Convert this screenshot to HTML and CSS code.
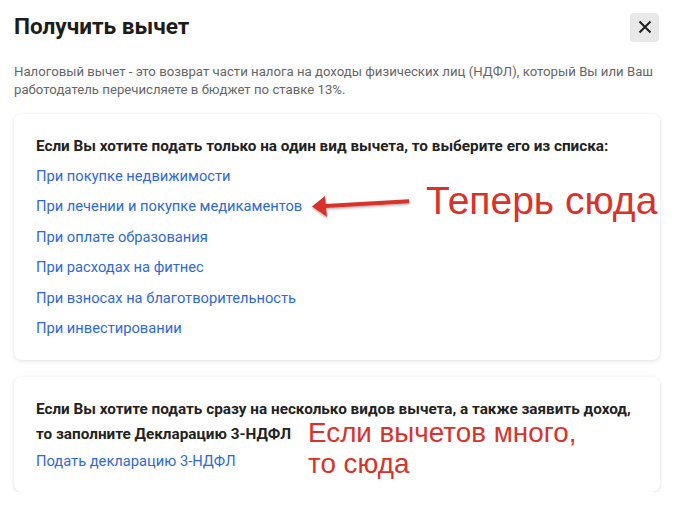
FILE: index.html
```html
<!DOCTYPE html>
<html lang="ru">
<head>
<meta charset="utf-8">
<link rel="stylesheet" href="styles.css">
</head>
<body>
<div class="dialog">
  <div class="header">
    <h1 class="title">Получить вычет</h1>
    <button class="close" aria-label="Закрыть">
      <svg width="14" height="14" viewBox="0 0 14 14"><path d="M1.5 1.5 L12.5 12.5 M12.5 1.5 L1.5 12.5" stroke="#1f1f1f" stroke-width="2" fill="none"/></svg>
    </button>
  </div>
  <p class="desc">Налоговый вычет - это возврат части налога на доходы физических лиц (НДФЛ), который Вы или Ваш работодатель перечисляете в бюджет по ставке 13%.</p>
  <div class="card card-one">
    <div class="card-title">Если Вы хотите подать только на один вид вычета, то выберите его из списка:</div>
    <div class="links">
      <a class="link" href="#">При покупке недвижимости</a>
      <a class="link" href="#">При лечении и покупке медикаментов</a>
      <a class="link" href="#">При оплате образования</a>
      <a class="link" href="#">При расходах на фитнес</a>
      <a class="link" href="#">При взносах на благотворительность</a>
      <a class="link" href="#">При инвестировании</a>
    </div>
  </div>
  <div class="card card-two">
    <div class="card-title multi">Если Вы хотите подать сразу на несколько видов вычета, а также заявить доход, <span class="nowrap">то заполните</span> Декларацию 3-НДФЛ</div>
    <a class="link decl" href="#">Подать декларацию 3-НДФЛ</a>
  </div>

  <svg class="arrow" width="110" height="30" viewBox="0 0 110 30">
    <defs>
      <filter id="sh" x="-10%" y="-30%" width="120%" height="180%">
        <feDropShadow dx="0" dy="1.5" stdDeviation="1.2" flood-color="#000" flood-opacity="0.3"/>
      </filter>
    </defs>
    <g filter="url(#sh)">
      <path d="M10 11.2 L98 6.2 L98.3 10.3 L10.3 15.3 Z" fill="#d9322b"/>
      <path d="M1 13.5 L14 3 L16 24 Z" fill="#d9322b"/>
    </g>
  </svg>
  <div class="note note-one">Теперь сюда</div>
  <div class="note note-two">Если вычетов много,<br>то сюда</div>
</div>
</body>
</html>
```
FILE: styles.css
```css
* { box-sizing: border-box; }
html, body { margin: 0; padding: 0; background: #fff; }
body { font-family: Roboto, "Noto Sans", sans-serif; color: #222; }

.dialog {
  position: relative;
  width: 700px;
  padding: 12px 40px 0 14px;
}

.header {
  display: flex;
  justify-content: space-between;
  align-items: center;
  height: 30px;
}
.title {
  margin: 0;
  font-size: 22.6px;
  font-weight: 700;
  color: #1c1c1c;
  line-height: 30px;
}
.close {
  width: 29px;
  height: 29px;
  border: none;
  border-radius: 4px;
  background: #e9e9e9;
  display: flex;
  align-items: center;
  justify-content: center;
  padding: 0;
  margin-right: 1px;
}

.desc {
  margin: 21px 0 0;
  font-size: 13.2px;
  line-height: 18px;
  color: #666;
}

.card {
  background: #fff;
  border-radius: 8px;
  box-shadow: 0 1px 4px rgba(0, 0, 0, 0.13);
  padding: 20px 22px 22px;
}
.card-one { margin-top: 15px; }
.card-two { margin-top: 17px; padding-bottom: 21px; }

.card-title {
  font-size: 15.3px;
  font-weight: 700;
  line-height: 25px;
  color: #222;
}
.nowrap { white-space: nowrap; }

.links {
  display: flex;
  flex-direction: column;
  gap: 10.5px;
  margin-top: 6.5px;
}
.link {
  display: block;
  font-size: 14.7px;
  line-height: 20px;
  color: #2f69d8;
  text-decoration: none;
}
.decl { margin-top: 4px; }

.arrow {
  position: absolute;
  left: 311px;
  top: 193px;
}
.note {
  position: absolute;
  font-family: "Liberation Sans", Arial, sans-serif;
  color: #d9322b;
  white-space: nowrap;
}
.note-one {
  left: 426px;
  top: 178px;
  font-size: 39px;
  line-height: 46px;
}
.note-two {
  left: 308px;
  top: 417px;
  font-size: 27.8px;
  line-height: 31px;
}
```
